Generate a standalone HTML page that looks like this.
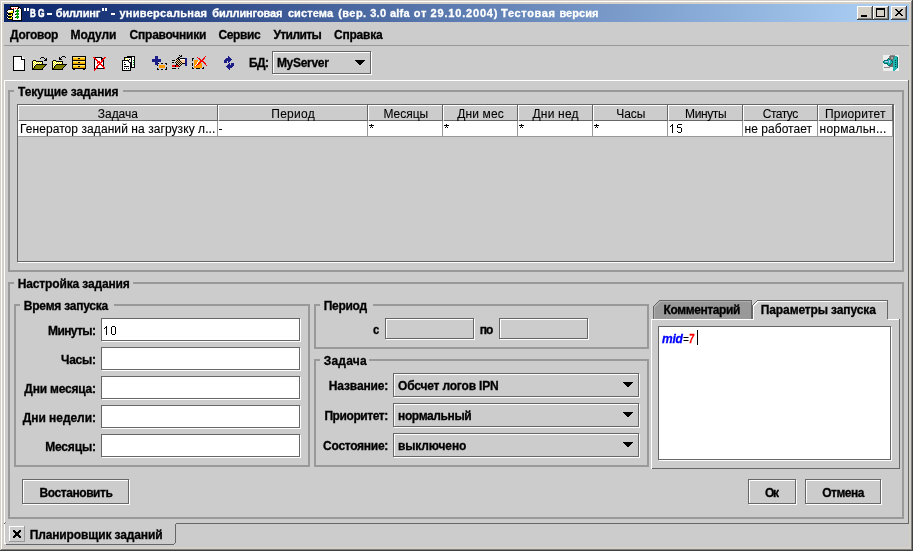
<!DOCTYPE html>
<html><head><meta charset="utf-8"><style>
html,body{margin:0;padding:0;width:913px;height:551px;overflow:hidden;background:#d4d0c8}
body>div,body>svg{position:absolute}
.t{position:absolute;font-family:'Liberation Sans', sans-serif;line-height:15px;white-space:pre}
</style></head><body>
<div style="left:0px;top:0px;width:913px;height:551px;background:#d4d0c8;"></div><div style="left:0px;top:0px;width:912px;height:1px;background:#d4d0c8;"></div><div style="left:0px;top:0px;width:1px;height:550px;background:#d4d0c8;"></div><div style="left:1px;top:1px;width:910px;height:1px;background:#ffffff;"></div><div style="left:1px;top:1px;width:1px;height:548px;background:#ffffff;"></div><div style="left:0px;top:550px;width:913px;height:1px;background:#404040;"></div><div style="left:912px;top:0px;width:1px;height:551px;background:#404040;"></div><div style="left:1px;top:549px;width:911px;height:1px;background:#808080;"></div><div style="left:911px;top:1px;width:1px;height:549px;background:#808080;"></div><div style="left:4px;top:4px;width:905px;height:18px;background:;background:linear-gradient(to right,#0a246a 0px,#a6caf0 855px)"></div><div style="left:4px;top:22px;width:905px;height:525px;background:#cccccc;"></div><div style="left:857px;top:6px;width:16px;height:14px;background:#d4d0c8;"></div><div style="left:857px;top:6px;width:16px;height:1px;background:#ffffff;"></div><div style="left:857px;top:6px;width:1px;height:14px;background:#ffffff;"></div><div style="left:857px;top:19px;width:16px;height:1px;background:#404040;"></div><div style="left:872px;top:6px;width:1px;height:14px;background:#404040;"></div><div style="left:858px;top:18px;width:14px;height:1px;background:#808080;"></div><div style="left:871px;top:7px;width:1px;height:12px;background:#808080;"></div><div style="left:861px;top:15px;width:6px;height:2px;background:#000"></div><div style="left:873px;top:6px;width:16px;height:14px;background:#d4d0c8;"></div><div style="left:873px;top:6px;width:16px;height:1px;background:#ffffff;"></div><div style="left:873px;top:6px;width:1px;height:14px;background:#ffffff;"></div><div style="left:873px;top:19px;width:16px;height:1px;background:#404040;"></div><div style="left:888px;top:6px;width:1px;height:14px;background:#404040;"></div><div style="left:874px;top:18px;width:14px;height:1px;background:#808080;"></div><div style="left:887px;top:7px;width:1px;height:12px;background:#808080;"></div><div style="left:876px;top:8px;width:9px;height:9px;box-sizing:border-box;border:1px solid #000;border-top-width:2px"></div><div style="left:891px;top:6px;width:16px;height:14px;background:#d4d0c8;"></div><div style="left:891px;top:6px;width:16px;height:1px;background:#ffffff;"></div><div style="left:891px;top:6px;width:1px;height:14px;background:#ffffff;"></div><div style="left:891px;top:19px;width:16px;height:1px;background:#404040;"></div><div style="left:906px;top:6px;width:1px;height:14px;background:#404040;"></div><div style="left:892px;top:18px;width:14px;height:1px;background:#808080;"></div><div style="left:905px;top:7px;width:1px;height:12px;background:#808080;"></div><svg style="left:895px;top:9px" width="8" height="7" shape-rendering="crispEdges"><rect x="0" y="0" width="2" height="1" fill="#000"/><rect x="6" y="0" width="2" height="1" fill="#000"/><rect x="1" y="1" width="2" height="1" fill="#000"/><rect x="5" y="1" width="2" height="1" fill="#000"/><rect x="2" y="2" width="2" height="1" fill="#000"/><rect x="4" y="2" width="2" height="1" fill="#000"/><rect x="3" y="3" width="2" height="1" fill="#000"/><rect x="3" y="3" width="2" height="1" fill="#000"/><rect x="2" y="4" width="2" height="1" fill="#000"/><rect x="4" y="4" width="2" height="1" fill="#000"/><rect x="1" y="5" width="2" height="1" fill="#000"/><rect x="5" y="5" width="2" height="1" fill="#000"/><rect x="0" y="6" width="2" height="1" fill="#000"/><rect x="6" y="6" width="2" height="1" fill="#000"/></svg><div style="left:24px;top:8px;width:2px;height:3px;background:#fff;"></div><div style="left:27px;top:8px;width:2px;height:3px;background:#fff;"></div><div style="left:47px;top:13px;width:5px;height:2px;background:#fff;"></div><div style="left:102px;top:8px;width:2px;height:3px;background:#fff;"></div><div style="left:105px;top:8px;width:2px;height:3px;background:#fff;"></div><div style="left:111px;top:13px;width:4px;height:2px;background:#fff;"></div><div style="left:4px;top:45px;width:905px;height:1px;background:#999999;"></div><div style="left:272px;top:51px;width:100px;height:24px;background:#cccccc;"></div><div style="left:273px;top:52px;width:99px;height:1px;background:#ffffff;"></div><div style="left:273px;top:74px;width:99px;height:1px;background:#ffffff;"></div><div style="left:273px;top:52px;width:1px;height:23px;background:#ffffff;"></div><div style="left:371px;top:52px;width:1px;height:23px;background:#ffffff;"></div><div style="left:272px;top:51px;width:99px;height:1px;background:#666666;"></div><div style="left:272px;top:73px;width:99px;height:1px;background:#666666;"></div><div style="left:272px;top:51px;width:1px;height:23px;background:#666666;"></div><div style="left:370px;top:51px;width:1px;height:23px;background:#666666;"></div><div style="left:272px;top:74px;width:1px;height:1px;background:#cccccc;"></div><div style="left:371px;top:51px;width:1px;height:1px;background:#cccccc;"></div><svg style="left:355px;top:60px" width="10" height="5" shape-rendering="crispEdges"><rect x="0" y="0" width="10" height="1" fill="#000"/><rect x="1" y="1" width="8" height="1" fill="#000"/><rect x="2" y="2" width="6" height="1" fill="#000"/><rect x="3" y="3" width="4" height="1" fill="#000"/><rect x="4" y="4" width="2" height="1" fill="#000"/></svg><div style="left:4px;top:80px;width:904px;height:1px;background:#ffffff;"></div><div style="left:4px;top:80px;width:1px;height:464px;background:#ffffff;"></div><div style="left:908px;top:80px;width:1px;height:444px;background:#666666;"></div><div style="left:176px;top:523px;width:733px;height:1px;background:#666666;"></div><div style="left:175px;top:524px;width:1px;height:19px;background:#666666;"></div><div style="left:174px;top:543px;width:1px;height:1px;background:#666666;"></div><div style="left:6px;top:544px;width:168px;height:1px;background:#666666;"></div><div style="left:5px;top:543px;width:1px;height:1px;background:#ffffff;"></div><div style="left:4px;top:523px;width:1px;height:1px;background:#555555;"></div><div style="left:5px;top:522px;width:1px;height:1px;background:#888888;"></div><div style="left:9px;top:526px;width:16px;height:1px;background:#ffffff;"></div><div style="left:9px;top:526px;width:1px;height:16px;background:#ffffff;"></div><div style="left:9px;top:541px;width:16px;height:1px;background:#999999;"></div><div style="left:24px;top:526px;width:1px;height:16px;background:#999999;"></div><svg style="left:13px;top:530px" width="9" height="9" shape-rendering="crispEdges"><rect x="0" y="0" width="2" height="2" fill="#000"/><rect x="6" y="0" width="2" height="2" fill="#000"/><rect x="1" y="1" width="2" height="2" fill="#000"/><rect x="5" y="1" width="2" height="2" fill="#000"/><rect x="2" y="2" width="2" height="2" fill="#000"/><rect x="4" y="2" width="2" height="2" fill="#000"/><rect x="3" y="3" width="2" height="2" fill="#000"/><rect x="3" y="3" width="2" height="2" fill="#000"/><rect x="4" y="4" width="2" height="2" fill="#000"/><rect x="2" y="4" width="2" height="2" fill="#000"/><rect x="5" y="5" width="2" height="2" fill="#000"/><rect x="1" y="5" width="2" height="2" fill="#000"/><rect x="6" y="6" width="2" height="2" fill="#000"/><rect x="0" y="6" width="2" height="2" fill="#000"/></svg><div style="left:8px;top:90px;width:6px;height:2px;background:#999999;"></div><div style="left:123px;top:90px;width:781px;height:2px;background:#999999;"></div><div style="left:8px;top:270px;width:896px;height:2px;background:#999999;"></div><div style="left:8px;top:90px;width:2px;height:182px;background:#999999;"></div><div style="left:902px;top:90px;width:2px;height:182px;background:#999999;"></div><div style="left:18px;top:105px;width:875px;height:156px;background:#cccccc;"></div><div style="left:17px;top:104px;width:877px;height:1px;background:#666666;"></div><div style="left:17px;top:261px;width:877px;height:1px;background:#666666;"></div><div style="left:17px;top:104px;width:1px;height:158px;background:#666666;"></div><div style="left:893px;top:104px;width:1px;height:158px;background:#666666;"></div><div style="left:894px;top:105px;width:1px;height:158px;background:#ffffff;"></div><div style="left:18px;top:262px;width:877px;height:1px;background:#ffffff;"></div><div style="left:18px;top:105px;width:200px;height:16px;background:#cccccc;"></div><div style="left:18px;top:105px;width:199px;height:1px;background:#ffffff;"></div><div style="left:18px;top:105px;width:1px;height:15px;background:#ffffff;"></div><div style="left:217px;top:105px;width:1px;height:16px;background:#666666;"></div><div style="left:19px;top:120px;width:199px;height:1px;background:#666666;"></div><div style="left:18px;top:121px;width:200px;height:15px;background:#ffffff;"></div><div style="left:217px;top:121px;width:1px;height:16px;background:#999999;"></div><div style="left:18px;top:136px;width:200px;height:1px;background:#999999;"></div><div style="left:218px;top:105px;width:150px;height:16px;background:#cccccc;"></div><div style="left:218px;top:105px;width:149px;height:1px;background:#ffffff;"></div><div style="left:218px;top:105px;width:1px;height:15px;background:#ffffff;"></div><div style="left:367px;top:105px;width:1px;height:16px;background:#666666;"></div><div style="left:219px;top:120px;width:149px;height:1px;background:#666666;"></div><div style="left:218px;top:121px;width:150px;height:15px;background:#ffffff;"></div><div style="left:367px;top:121px;width:1px;height:16px;background:#999999;"></div><div style="left:218px;top:136px;width:150px;height:1px;background:#999999;"></div><div style="left:219px;top:129px;width:3px;height:1px;background:#000;"></div><div style="left:368px;top:105px;width:75px;height:16px;background:#cccccc;"></div><div style="left:368px;top:105px;width:74px;height:1px;background:#ffffff;"></div><div style="left:368px;top:105px;width:1px;height:15px;background:#ffffff;"></div><div style="left:442px;top:105px;width:1px;height:16px;background:#666666;"></div><div style="left:369px;top:120px;width:74px;height:1px;background:#666666;"></div><div style="left:368px;top:121px;width:75px;height:15px;background:#ffffff;"></div><div style="left:442px;top:121px;width:1px;height:16px;background:#999999;"></div><div style="left:368px;top:136px;width:75px;height:1px;background:#999999;"></div><svg style="left:369px;top:124px" width="5" height="4" shape-rendering="crispEdges"><rect x="2" y="0" width="1" height="1"/><rect x="0" y="1" width="5" height="1"/><rect x="2" y="2" width="1" height="1"/><rect x="1" y="3" width="1" height="1"/><rect x="3" y="3" width="1" height="1"/></svg><div style="left:443px;top:105px;width:75px;height:16px;background:#cccccc;"></div><div style="left:443px;top:105px;width:74px;height:1px;background:#ffffff;"></div><div style="left:443px;top:105px;width:1px;height:15px;background:#ffffff;"></div><div style="left:517px;top:105px;width:1px;height:16px;background:#666666;"></div><div style="left:444px;top:120px;width:74px;height:1px;background:#666666;"></div><div style="left:443px;top:121px;width:75px;height:15px;background:#ffffff;"></div><div style="left:517px;top:121px;width:1px;height:16px;background:#999999;"></div><div style="left:443px;top:136px;width:75px;height:1px;background:#999999;"></div><svg style="left:444px;top:124px" width="5" height="4" shape-rendering="crispEdges"><rect x="2" y="0" width="1" height="1"/><rect x="0" y="1" width="5" height="1"/><rect x="2" y="2" width="1" height="1"/><rect x="1" y="3" width="1" height="1"/><rect x="3" y="3" width="1" height="1"/></svg><div style="left:518px;top:105px;width:75px;height:16px;background:#cccccc;"></div><div style="left:518px;top:105px;width:74px;height:1px;background:#ffffff;"></div><div style="left:518px;top:105px;width:1px;height:15px;background:#ffffff;"></div><div style="left:592px;top:105px;width:1px;height:16px;background:#666666;"></div><div style="left:519px;top:120px;width:74px;height:1px;background:#666666;"></div><div style="left:518px;top:121px;width:75px;height:15px;background:#ffffff;"></div><div style="left:592px;top:121px;width:1px;height:16px;background:#999999;"></div><div style="left:518px;top:136px;width:75px;height:1px;background:#999999;"></div><svg style="left:519px;top:124px" width="5" height="4" shape-rendering="crispEdges"><rect x="2" y="0" width="1" height="1"/><rect x="0" y="1" width="5" height="1"/><rect x="2" y="2" width="1" height="1"/><rect x="1" y="3" width="1" height="1"/><rect x="3" y="3" width="1" height="1"/></svg><div style="left:593px;top:105px;width:75px;height:16px;background:#cccccc;"></div><div style="left:593px;top:105px;width:74px;height:1px;background:#ffffff;"></div><div style="left:593px;top:105px;width:1px;height:15px;background:#ffffff;"></div><div style="left:667px;top:105px;width:1px;height:16px;background:#666666;"></div><div style="left:594px;top:120px;width:74px;height:1px;background:#666666;"></div><div style="left:593px;top:121px;width:75px;height:15px;background:#ffffff;"></div><div style="left:667px;top:121px;width:1px;height:16px;background:#999999;"></div><div style="left:593px;top:136px;width:75px;height:1px;background:#999999;"></div><svg style="left:594px;top:124px" width="5" height="4" shape-rendering="crispEdges"><rect x="2" y="0" width="1" height="1"/><rect x="0" y="1" width="5" height="1"/><rect x="2" y="2" width="1" height="1"/><rect x="1" y="3" width="1" height="1"/><rect x="3" y="3" width="1" height="1"/></svg><div style="left:668px;top:105px;width:75px;height:16px;background:#cccccc;"></div><div style="left:668px;top:105px;width:74px;height:1px;background:#ffffff;"></div><div style="left:668px;top:105px;width:1px;height:15px;background:#ffffff;"></div><div style="left:742px;top:105px;width:1px;height:16px;background:#666666;"></div><div style="left:669px;top:120px;width:74px;height:1px;background:#666666;"></div><div style="left:668px;top:121px;width:75px;height:15px;background:#ffffff;"></div><div style="left:742px;top:121px;width:1px;height:16px;background:#999999;"></div><div style="left:668px;top:136px;width:75px;height:1px;background:#999999;"></div><div style="left:672px;top:124px;width:1px;height:9px;background:#000;"></div><div style="left:671px;top:125px;width:1px;height:1px;background:#000;"></div><div style="left:670px;top:126px;width:1px;height:1px;background:#000;"></div><div style="left:678px;top:124px;width:4px;height:1px;background:#000;"></div><div style="left:677px;top:125px;width:1px;height:3px;background:#000;"></div><div style="left:678px;top:127px;width:3px;height:1px;background:#000;"></div><div style="left:681px;top:128px;width:1px;height:4px;background:#000;"></div><div style="left:678px;top:132px;width:3px;height:1px;background:#000;"></div><div style="left:677px;top:131px;width:1px;height:1px;background:#000;"></div><div style="left:743px;top:105px;width:75px;height:16px;background:#cccccc;"></div><div style="left:743px;top:105px;width:74px;height:1px;background:#ffffff;"></div><div style="left:743px;top:105px;width:1px;height:15px;background:#ffffff;"></div><div style="left:817px;top:105px;width:1px;height:16px;background:#666666;"></div><div style="left:744px;top:120px;width:74px;height:1px;background:#666666;"></div><div style="left:743px;top:121px;width:75px;height:15px;background:#ffffff;"></div><div style="left:817px;top:121px;width:1px;height:16px;background:#999999;"></div><div style="left:743px;top:136px;width:75px;height:1px;background:#999999;"></div><div style="left:818px;top:105px;width:75px;height:16px;background:#cccccc;"></div><div style="left:818px;top:105px;width:74px;height:1px;background:#ffffff;"></div><div style="left:818px;top:105px;width:1px;height:15px;background:#ffffff;"></div><div style="left:892px;top:105px;width:1px;height:16px;background:#666666;"></div><div style="left:819px;top:120px;width:74px;height:1px;background:#666666;"></div><div style="left:818px;top:121px;width:75px;height:15px;background:#ffffff;"></div><div style="left:892px;top:121px;width:1px;height:16px;background:#999999;"></div><div style="left:818px;top:136px;width:75px;height:1px;background:#999999;"></div><div style="left:8px;top:282px;width:6px;height:2px;background:#999999;"></div><div style="left:133px;top:282px;width:771px;height:2px;background:#999999;"></div><div style="left:8px;top:517px;width:896px;height:2px;background:#999999;"></div><div style="left:8px;top:282px;width:2px;height:237px;background:#999999;"></div><div style="left:902px;top:282px;width:2px;height:237px;background:#999999;"></div><div style="left:14px;top:304px;width:6px;height:2px;background:#999999;"></div><div style="left:114px;top:304px;width:196px;height:2px;background:#999999;"></div><div style="left:14px;top:465px;width:296px;height:2px;background:#999999;"></div><div style="left:14px;top:304px;width:2px;height:163px;background:#999999;"></div><div style="left:308px;top:304px;width:2px;height:163px;background:#999999;"></div><div style="left:101px;top:318px;width:200px;height:24px;background:#ffffff;"></div><div style="left:102px;top:319px;width:199px;height:1px;background:#ffffff;"></div><div style="left:102px;top:341px;width:199px;height:1px;background:#ffffff;"></div><div style="left:102px;top:319px;width:1px;height:23px;background:#ffffff;"></div><div style="left:300px;top:319px;width:1px;height:23px;background:#ffffff;"></div><div style="left:101px;top:318px;width:199px;height:1px;background:#666666;"></div><div style="left:101px;top:340px;width:199px;height:1px;background:#666666;"></div><div style="left:101px;top:318px;width:1px;height:23px;background:#666666;"></div><div style="left:299px;top:318px;width:1px;height:23px;background:#666666;"></div><div style="left:101px;top:341px;width:1px;height:1px;background:#cccccc;"></div><div style="left:300px;top:318px;width:1px;height:1px;background:#cccccc;"></div><div style="left:106px;top:326px;width:1px;height:9px;background:#000;"></div><div style="left:105px;top:327px;width:1px;height:1px;background:#000;"></div><div style="left:104px;top:328px;width:1px;height:1px;background:#000;"></div><div style="left:112px;top:326px;width:3px;height:1px;background:#000;"></div><div style="left:112px;top:334px;width:3px;height:1px;background:#000;"></div><div style="left:111px;top:327px;width:1px;height:7px;background:#000;"></div><div style="left:115px;top:327px;width:1px;height:7px;background:#000;"></div><div style="left:101px;top:347px;width:200px;height:24px;background:#ffffff;"></div><div style="left:102px;top:348px;width:199px;height:1px;background:#ffffff;"></div><div style="left:102px;top:370px;width:199px;height:1px;background:#ffffff;"></div><div style="left:102px;top:348px;width:1px;height:23px;background:#ffffff;"></div><div style="left:300px;top:348px;width:1px;height:23px;background:#ffffff;"></div><div style="left:101px;top:347px;width:199px;height:1px;background:#666666;"></div><div style="left:101px;top:369px;width:199px;height:1px;background:#666666;"></div><div style="left:101px;top:347px;width:1px;height:23px;background:#666666;"></div><div style="left:299px;top:347px;width:1px;height:23px;background:#666666;"></div><div style="left:101px;top:370px;width:1px;height:1px;background:#cccccc;"></div><div style="left:300px;top:347px;width:1px;height:1px;background:#cccccc;"></div><div style="left:101px;top:376px;width:200px;height:24px;background:#ffffff;"></div><div style="left:102px;top:377px;width:199px;height:1px;background:#ffffff;"></div><div style="left:102px;top:399px;width:199px;height:1px;background:#ffffff;"></div><div style="left:102px;top:377px;width:1px;height:23px;background:#ffffff;"></div><div style="left:300px;top:377px;width:1px;height:23px;background:#ffffff;"></div><div style="left:101px;top:376px;width:199px;height:1px;background:#666666;"></div><div style="left:101px;top:398px;width:199px;height:1px;background:#666666;"></div><div style="left:101px;top:376px;width:1px;height:23px;background:#666666;"></div><div style="left:299px;top:376px;width:1px;height:23px;background:#666666;"></div><div style="left:101px;top:399px;width:1px;height:1px;background:#cccccc;"></div><div style="left:300px;top:376px;width:1px;height:1px;background:#cccccc;"></div><div style="left:101px;top:405px;width:200px;height:24px;background:#ffffff;"></div><div style="left:102px;top:406px;width:199px;height:1px;background:#ffffff;"></div><div style="left:102px;top:428px;width:199px;height:1px;background:#ffffff;"></div><div style="left:102px;top:406px;width:1px;height:23px;background:#ffffff;"></div><div style="left:300px;top:406px;width:1px;height:23px;background:#ffffff;"></div><div style="left:101px;top:405px;width:199px;height:1px;background:#666666;"></div><div style="left:101px;top:427px;width:199px;height:1px;background:#666666;"></div><div style="left:101px;top:405px;width:1px;height:23px;background:#666666;"></div><div style="left:299px;top:405px;width:1px;height:23px;background:#666666;"></div><div style="left:101px;top:428px;width:1px;height:1px;background:#cccccc;"></div><div style="left:300px;top:405px;width:1px;height:1px;background:#cccccc;"></div><div style="left:101px;top:434px;width:200px;height:24px;background:#ffffff;"></div><div style="left:102px;top:435px;width:199px;height:1px;background:#ffffff;"></div><div style="left:102px;top:457px;width:199px;height:1px;background:#ffffff;"></div><div style="left:102px;top:435px;width:1px;height:23px;background:#ffffff;"></div><div style="left:300px;top:435px;width:1px;height:23px;background:#ffffff;"></div><div style="left:101px;top:434px;width:199px;height:1px;background:#666666;"></div><div style="left:101px;top:456px;width:199px;height:1px;background:#666666;"></div><div style="left:101px;top:434px;width:1px;height:23px;background:#666666;"></div><div style="left:299px;top:434px;width:1px;height:23px;background:#666666;"></div><div style="left:101px;top:457px;width:1px;height:1px;background:#cccccc;"></div><div style="left:300px;top:434px;width:1px;height:1px;background:#cccccc;"></div><div style="left:314px;top:304px;width:6px;height:2px;background:#999999;"></div><div style="left:373px;top:304px;width:276px;height:2px;background:#999999;"></div><div style="left:314px;top:347px;width:335px;height:2px;background:#999999;"></div><div style="left:314px;top:304px;width:2px;height:45px;background:#999999;"></div><div style="left:647px;top:304px;width:2px;height:45px;background:#999999;"></div><div style="left:385px;top:318px;width:90px;height:22px;background:#cccccc;"></div><div style="left:386px;top:319px;width:89px;height:1px;background:#ffffff;"></div><div style="left:386px;top:339px;width:89px;height:1px;background:#ffffff;"></div><div style="left:386px;top:319px;width:1px;height:21px;background:#ffffff;"></div><div style="left:474px;top:319px;width:1px;height:21px;background:#ffffff;"></div><div style="left:385px;top:318px;width:89px;height:1px;background:#666666;"></div><div style="left:385px;top:338px;width:89px;height:1px;background:#666666;"></div><div style="left:385px;top:318px;width:1px;height:21px;background:#666666;"></div><div style="left:473px;top:318px;width:1px;height:21px;background:#666666;"></div><div style="left:385px;top:339px;width:1px;height:1px;background:#cccccc;"></div><div style="left:474px;top:318px;width:1px;height:1px;background:#cccccc;"></div><div style="left:499px;top:318px;width:90px;height:22px;background:#cccccc;"></div><div style="left:500px;top:319px;width:89px;height:1px;background:#ffffff;"></div><div style="left:500px;top:339px;width:89px;height:1px;background:#ffffff;"></div><div style="left:500px;top:319px;width:1px;height:21px;background:#ffffff;"></div><div style="left:588px;top:319px;width:1px;height:21px;background:#ffffff;"></div><div style="left:499px;top:318px;width:89px;height:1px;background:#666666;"></div><div style="left:499px;top:338px;width:89px;height:1px;background:#666666;"></div><div style="left:499px;top:318px;width:1px;height:21px;background:#666666;"></div><div style="left:587px;top:318px;width:1px;height:21px;background:#666666;"></div><div style="left:499px;top:339px;width:1px;height:1px;background:#cccccc;"></div><div style="left:588px;top:318px;width:1px;height:1px;background:#cccccc;"></div><div style="left:314px;top:359px;width:6px;height:2px;background:#999999;"></div><div style="left:369px;top:359px;width:280px;height:2px;background:#999999;"></div><div style="left:314px;top:465px;width:335px;height:2px;background:#999999;"></div><div style="left:314px;top:359px;width:2px;height:108px;background:#999999;"></div><div style="left:647px;top:359px;width:2px;height:108px;background:#999999;"></div><div style="left:393px;top:373px;width:247px;height:25px;background:#cccccc;"></div><div style="left:394px;top:374px;width:246px;height:1px;background:#ffffff;"></div><div style="left:394px;top:397px;width:246px;height:1px;background:#ffffff;"></div><div style="left:394px;top:374px;width:1px;height:24px;background:#ffffff;"></div><div style="left:639px;top:374px;width:1px;height:24px;background:#ffffff;"></div><div style="left:393px;top:373px;width:246px;height:1px;background:#666666;"></div><div style="left:393px;top:396px;width:246px;height:1px;background:#666666;"></div><div style="left:393px;top:373px;width:1px;height:24px;background:#666666;"></div><div style="left:638px;top:373px;width:1px;height:24px;background:#666666;"></div><div style="left:393px;top:397px;width:1px;height:1px;background:#cccccc;"></div><div style="left:639px;top:373px;width:1px;height:1px;background:#cccccc;"></div><svg style="left:623px;top:382px" width="10" height="5" shape-rendering="crispEdges"><rect x="0" y="0" width="10" height="1" fill="#000"/><rect x="1" y="1" width="8" height="1" fill="#000"/><rect x="2" y="2" width="6" height="1" fill="#000"/><rect x="3" y="3" width="4" height="1" fill="#000"/><rect x="4" y="4" width="2" height="1" fill="#000"/></svg><div style="left:393px;top:403px;width:247px;height:25px;background:#cccccc;"></div><div style="left:394px;top:404px;width:246px;height:1px;background:#ffffff;"></div><div style="left:394px;top:427px;width:246px;height:1px;background:#ffffff;"></div><div style="left:394px;top:404px;width:1px;height:24px;background:#ffffff;"></div><div style="left:639px;top:404px;width:1px;height:24px;background:#ffffff;"></div><div style="left:393px;top:403px;width:246px;height:1px;background:#666666;"></div><div style="left:393px;top:426px;width:246px;height:1px;background:#666666;"></div><div style="left:393px;top:403px;width:1px;height:24px;background:#666666;"></div><div style="left:638px;top:403px;width:1px;height:24px;background:#666666;"></div><div style="left:393px;top:427px;width:1px;height:1px;background:#cccccc;"></div><div style="left:639px;top:403px;width:1px;height:1px;background:#cccccc;"></div><svg style="left:623px;top:412px" width="10" height="5" shape-rendering="crispEdges"><rect x="0" y="0" width="10" height="1" fill="#000"/><rect x="1" y="1" width="8" height="1" fill="#000"/><rect x="2" y="2" width="6" height="1" fill="#000"/><rect x="3" y="3" width="4" height="1" fill="#000"/><rect x="4" y="4" width="2" height="1" fill="#000"/></svg><div style="left:393px;top:433px;width:247px;height:25px;background:#cccccc;"></div><div style="left:394px;top:434px;width:246px;height:1px;background:#ffffff;"></div><div style="left:394px;top:457px;width:246px;height:1px;background:#ffffff;"></div><div style="left:394px;top:434px;width:1px;height:24px;background:#ffffff;"></div><div style="left:639px;top:434px;width:1px;height:24px;background:#ffffff;"></div><div style="left:393px;top:433px;width:246px;height:1px;background:#666666;"></div><div style="left:393px;top:456px;width:246px;height:1px;background:#666666;"></div><div style="left:393px;top:433px;width:1px;height:24px;background:#666666;"></div><div style="left:638px;top:433px;width:1px;height:24px;background:#666666;"></div><div style="left:393px;top:457px;width:1px;height:1px;background:#cccccc;"></div><div style="left:639px;top:433px;width:1px;height:1px;background:#cccccc;"></div><svg style="left:623px;top:442px" width="10" height="5" shape-rendering="crispEdges"><rect x="0" y="0" width="10" height="1" fill="#000"/><rect x="1" y="1" width="8" height="1" fill="#000"/><rect x="2" y="2" width="6" height="1" fill="#000"/><rect x="3" y="3" width="4" height="1" fill="#000"/><rect x="4" y="4" width="2" height="1" fill="#000"/></svg><svg style="left:651px;top:298px" width="250" height="24" shape-rendering="crispEdges"><path d="M3 21 V8 L9 2 H101 V21 Z" fill="#999999"/><path d="M2.5 21 V8.5 L8.5 2.5 H100.5 V21" fill="none" stroke="#666666"/><path d="M3.5 21 V8.9 L8.9 3.5 H100" fill="none" stroke="#b0b0b0"/><path d="M101 22 V8 L107 2 H237 V22 Z" fill="#cccccc"/><path d="M101.5 21 V7.5 L106.5 2.5 H236.5 V21" fill="none" stroke="#666666"/><path d="M102.5 22 V8 L107 3.5 H236" fill="none" stroke="#ffffff"/></svg><div style="left:651px;top:319px;width:102px;height:1px;background:#ffffff;"></div><div style="left:888px;top:319px;width:11px;height:1px;background:#ffffff;"></div><div style="left:651px;top:319px;width:1px;height:150px;background:#ffffff;"></div><div style="left:652px;top:468px;width:248px;height:1px;background:#666666;"></div><div style="left:899px;top:319px;width:1px;height:150px;background:#666666;"></div><div style="left:658px;top:326px;width:234px;height:135px;background:#ffffff;"></div><div style="left:659px;top:327px;width:233px;height:1px;background:#ffffff;"></div><div style="left:659px;top:460px;width:233px;height:1px;background:#ffffff;"></div><div style="left:659px;top:327px;width:1px;height:134px;background:#ffffff;"></div><div style="left:891px;top:327px;width:1px;height:134px;background:#ffffff;"></div><div style="left:658px;top:326px;width:233px;height:1px;background:#666666;"></div><div style="left:658px;top:459px;width:233px;height:1px;background:#666666;"></div><div style="left:658px;top:326px;width:1px;height:134px;background:#666666;"></div><div style="left:890px;top:326px;width:1px;height:134px;background:#666666;"></div><div style="left:658px;top:460px;width:1px;height:1px;background:#cccccc;"></div><div style="left:891px;top:326px;width:1px;height:1px;background:#cccccc;"></div><div style="left:697px;top:330px;width:1px;height:15px;background:#000000;"></div><div style="left:22px;top:479px;width:108px;height:26px;background:#cccccc;"></div><div style="left:23px;top:480px;width:107px;height:1px;background:#ffffff;"></div><div style="left:23px;top:504px;width:107px;height:1px;background:#ffffff;"></div><div style="left:23px;top:480px;width:1px;height:25px;background:#ffffff;"></div><div style="left:129px;top:480px;width:1px;height:25px;background:#ffffff;"></div><div style="left:22px;top:479px;width:107px;height:1px;background:#666666;"></div><div style="left:22px;top:503px;width:107px;height:1px;background:#666666;"></div><div style="left:22px;top:479px;width:1px;height:25px;background:#666666;"></div><div style="left:128px;top:479px;width:1px;height:25px;background:#666666;"></div><div style="left:22px;top:504px;width:1px;height:1px;background:#cccccc;"></div><div style="left:129px;top:479px;width:1px;height:1px;background:#cccccc;"></div><div style="left:748px;top:479px;width:49px;height:26px;background:#cccccc;"></div><div style="left:749px;top:480px;width:48px;height:1px;background:#ffffff;"></div><div style="left:749px;top:504px;width:48px;height:1px;background:#ffffff;"></div><div style="left:749px;top:480px;width:1px;height:25px;background:#ffffff;"></div><div style="left:796px;top:480px;width:1px;height:25px;background:#ffffff;"></div><div style="left:748px;top:479px;width:48px;height:1px;background:#666666;"></div><div style="left:748px;top:503px;width:48px;height:1px;background:#666666;"></div><div style="left:748px;top:479px;width:1px;height:25px;background:#666666;"></div><div style="left:795px;top:479px;width:1px;height:25px;background:#666666;"></div><div style="left:748px;top:504px;width:1px;height:1px;background:#cccccc;"></div><div style="left:796px;top:479px;width:1px;height:1px;background:#cccccc;"></div><div style="left:805px;top:479px;width:77px;height:26px;background:#cccccc;"></div><div style="left:806px;top:480px;width:76px;height:1px;background:#ffffff;"></div><div style="left:806px;top:504px;width:76px;height:1px;background:#ffffff;"></div><div style="left:806px;top:480px;width:1px;height:25px;background:#ffffff;"></div><div style="left:881px;top:480px;width:1px;height:25px;background:#ffffff;"></div><div style="left:805px;top:479px;width:76px;height:1px;background:#666666;"></div><div style="left:805px;top:503px;width:76px;height:1px;background:#666666;"></div><div style="left:805px;top:479px;width:1px;height:25px;background:#666666;"></div><div style="left:880px;top:479px;width:1px;height:25px;background:#666666;"></div><div style="left:805px;top:504px;width:1px;height:1px;background:#cccccc;"></div><div style="left:881px;top:479px;width:1px;height:1px;background:#cccccc;"></div>
<svg style="position:absolute;left:13px;top:56px" width="12" height="15" shape-rendering="crispEdges"><rect x="0" y="0" width="9" height="1" fill="#000000"/><rect x="9" y="0" width="1" height="1" fill="#e0e0e0"/><rect x="0" y="1" width="1" height="1" fill="#000000"/><rect x="1" y="1" width="7" height="1" fill="#ffffff"/><rect x="8" y="1" width="1" height="1" fill="#000000"/><rect x="9" y="1" width="1" height="1" fill="#ffffff"/><rect x="10" y="1" width="1" height="1" fill="#e0e0e0"/><rect x="0" y="2" width="1" height="1" fill="#000000"/><rect x="1" y="2" width="7" height="1" fill="#ffffff"/><rect x="8" y="2" width="1" height="1" fill="#000000"/><rect x="9" y="2" width="2" height="1" fill="#ffffff"/><rect x="11" y="2" width="1" height="1" fill="#e0e0e0"/><rect x="0" y="3" width="1" height="1" fill="#000000"/><rect x="1" y="3" width="7" height="1" fill="#ffffff"/><rect x="8" y="3" width="4" height="1" fill="#000000"/><rect x="0" y="4" width="1" height="1" fill="#000000"/><rect x="1" y="4" width="10" height="1" fill="#ffffff"/><rect x="11" y="4" width="1" height="1" fill="#000000"/><rect x="0" y="5" width="1" height="1" fill="#000000"/><rect x="1" y="5" width="10" height="1" fill="#ffffff"/><rect x="11" y="5" width="1" height="1" fill="#000000"/><rect x="0" y="6" width="1" height="1" fill="#000000"/><rect x="1" y="6" width="10" height="1" fill="#ffffff"/><rect x="11" y="6" width="1" height="1" fill="#000000"/><rect x="0" y="7" width="1" height="1" fill="#000000"/><rect x="1" y="7" width="10" height="1" fill="#ffffff"/><rect x="11" y="7" width="1" height="1" fill="#000000"/><rect x="0" y="8" width="1" height="1" fill="#000000"/><rect x="1" y="8" width="10" height="1" fill="#ffffff"/><rect x="11" y="8" width="1" height="1" fill="#000000"/><rect x="0" y="9" width="1" height="1" fill="#000000"/><rect x="1" y="9" width="10" height="1" fill="#ffffff"/><rect x="11" y="9" width="1" height="1" fill="#000000"/><rect x="0" y="10" width="1" height="1" fill="#000000"/><rect x="1" y="10" width="10" height="1" fill="#ffffff"/><rect x="11" y="10" width="1" height="1" fill="#000000"/><rect x="0" y="11" width="1" height="1" fill="#000000"/><rect x="1" y="11" width="10" height="1" fill="#ffffff"/><rect x="11" y="11" width="1" height="1" fill="#000000"/><rect x="0" y="12" width="1" height="1" fill="#000000"/><rect x="1" y="12" width="10" height="1" fill="#ffffff"/><rect x="11" y="12" width="1" height="1" fill="#000000"/><rect x="0" y="13" width="1" height="1" fill="#000000"/><rect x="1" y="13" width="10" height="1" fill="#ffffff"/><rect x="11" y="13" width="1" height="1" fill="#000000"/><rect x="0" y="14" width="12" height="1" fill="#000000"/></svg>
<svg style="position:absolute;left:40px;top:57px" width="7" height="4" shape-rendering="crispEdges"><rect x="1" y="0" width="3" height="1" fill="#000000"/><rect x="0" y="1" width="1" height="1" fill="#000000"/><rect x="4" y="1" width="1" height="1" fill="#000000"/><rect x="6" y="1" width="1" height="1" fill="#000000"/><rect x="5" y="2" width="2" height="1" fill="#000000"/><rect x="4" y="3" width="3" height="1" fill="#000000"/></svg>
<svg style="position:absolute;left:32px;top:60px" width="15" height="10" shape-rendering="crispEdges"><rect x="1" y="0" width="3" height="1" fill="#000000"/><rect x="0" y="1" width="1" height="1" fill="#000000"/><rect x="1" y="1" width="1" height="1" fill="#ffff00"/><rect x="2" y="1" width="1" height="1" fill="#ffffff"/><rect x="3" y="1" width="1" height="1" fill="#ffff00"/><rect x="4" y="1" width="7" height="1" fill="#000000"/><rect x="0" y="2" width="1" height="1" fill="#000000"/><rect x="1" y="2" width="1" height="1" fill="#ffffff"/><rect x="2" y="2" width="1" height="1" fill="#ffff00"/><rect x="3" y="2" width="1" height="1" fill="#ffffff"/><rect x="4" y="2" width="1" height="1" fill="#ffff00"/><rect x="5" y="2" width="1" height="1" fill="#ffffff"/><rect x="6" y="2" width="1" height="1" fill="#ffff00"/><rect x="7" y="2" width="1" height="1" fill="#ffffff"/><rect x="8" y="2" width="1" height="1" fill="#ffff00"/><rect x="9" y="2" width="1" height="1" fill="#ffffff"/><rect x="10" y="2" width="1" height="1" fill="#000000"/><rect x="0" y="3" width="1" height="1" fill="#000000"/><rect x="1" y="3" width="1" height="1" fill="#ffff00"/><rect x="2" y="3" width="1" height="1" fill="#ffffff"/><rect x="3" y="3" width="1" height="1" fill="#ffff00"/><rect x="4" y="3" width="1" height="1" fill="#ffffff"/><rect x="5" y="3" width="1" height="1" fill="#ffff00"/><rect x="6" y="3" width="1" height="1" fill="#ffffff"/><rect x="7" y="3" width="1" height="1" fill="#ffff00"/><rect x="8" y="3" width="1" height="1" fill="#ffffff"/><rect x="9" y="3" width="1" height="1" fill="#ffff00"/><rect x="10" y="3" width="1" height="1" fill="#000000"/><rect x="0" y="4" width="1" height="1" fill="#000000"/><rect x="1" y="4" width="1" height="1" fill="#ffffff"/><rect x="2" y="4" width="1" height="1" fill="#ffff00"/><rect x="3" y="4" width="1" height="1" fill="#ffffff"/><rect x="4" y="4" width="11" height="1" fill="#000000"/><rect x="0" y="5" width="1" height="1" fill="#000000"/><rect x="1" y="5" width="1" height="1" fill="#ffff00"/><rect x="2" y="5" width="1" height="1" fill="#ffffff"/><rect x="3" y="5" width="1" height="1" fill="#000000"/><rect x="4" y="5" width="9" height="1" fill="#808000"/><rect x="13" y="5" width="1" height="1" fill="#000000"/><rect x="0" y="6" width="1" height="1" fill="#000000"/><rect x="1" y="6" width="1" height="1" fill="#ffffff"/><rect x="2" y="6" width="1" height="1" fill="#000000"/><rect x="3" y="6" width="9" height="1" fill="#808000"/><rect x="12" y="6" width="1" height="1" fill="#000000"/><rect x="0" y="7" width="1" height="1" fill="#000000"/><rect x="1" y="7" width="1" height="1" fill="#ffff00"/><rect x="2" y="7" width="1" height="1" fill="#000000"/><rect x="3" y="7" width="8" height="1" fill="#808000"/><rect x="11" y="7" width="1" height="1" fill="#000000"/><rect x="0" y="8" width="2" height="1" fill="#000000"/><rect x="2" y="8" width="8" height="1" fill="#808000"/><rect x="10" y="8" width="1" height="1" fill="#000000"/><rect x="0" y="9" width="11" height="1" fill="#000000"/></svg>
<svg style="position:absolute;left:59px;top:56px" width="7" height="4" shape-rendering="crispEdges"><rect x="3" y="0" width="3" height="1" fill="#000000"/><rect x="0" y="1" width="1" height="1" fill="#000000"/><rect x="2" y="1" width="1" height="1" fill="#000000"/><rect x="6" y="1" width="1" height="1" fill="#000000"/><rect x="0" y="2" width="2" height="1" fill="#000000"/><rect x="0" y="3" width="3" height="1" fill="#000000"/></svg>
<svg style="position:absolute;left:52px;top:60px" width="15" height="10" shape-rendering="crispEdges"><rect x="1" y="0" width="3" height="1" fill="#000000"/><rect x="0" y="1" width="1" height="1" fill="#000000"/><rect x="1" y="1" width="1" height="1" fill="#ffff00"/><rect x="2" y="1" width="1" height="1" fill="#ffffff"/><rect x="3" y="1" width="1" height="1" fill="#ffff00"/><rect x="4" y="1" width="7" height="1" fill="#000000"/><rect x="0" y="2" width="1" height="1" fill="#000000"/><rect x="1" y="2" width="1" height="1" fill="#ffffff"/><rect x="2" y="2" width="1" height="1" fill="#ffff00"/><rect x="3" y="2" width="1" height="1" fill="#ffffff"/><rect x="4" y="2" width="1" height="1" fill="#ffff00"/><rect x="5" y="2" width="1" height="1" fill="#ffffff"/><rect x="6" y="2" width="1" height="1" fill="#ffff00"/><rect x="7" y="2" width="1" height="1" fill="#ffffff"/><rect x="8" y="2" width="1" height="1" fill="#ffff00"/><rect x="9" y="2" width="1" height="1" fill="#ffffff"/><rect x="10" y="2" width="1" height="1" fill="#000000"/><rect x="0" y="3" width="1" height="1" fill="#000000"/><rect x="1" y="3" width="1" height="1" fill="#ffff00"/><rect x="2" y="3" width="1" height="1" fill="#ffffff"/><rect x="3" y="3" width="1" height="1" fill="#ffff00"/><rect x="4" y="3" width="1" height="1" fill="#ffffff"/><rect x="5" y="3" width="1" height="1" fill="#ffff00"/><rect x="6" y="3" width="1" height="1" fill="#ffffff"/><rect x="7" y="3" width="1" height="1" fill="#ffff00"/><rect x="8" y="3" width="1" height="1" fill="#ffffff"/><rect x="9" y="3" width="1" height="1" fill="#ffff00"/><rect x="10" y="3" width="1" height="1" fill="#000000"/><rect x="0" y="4" width="1" height="1" fill="#000000"/><rect x="1" y="4" width="1" height="1" fill="#ffffff"/><rect x="2" y="4" width="1" height="1" fill="#ffff00"/><rect x="3" y="4" width="1" height="1" fill="#ffffff"/><rect x="4" y="4" width="11" height="1" fill="#000000"/><rect x="0" y="5" width="1" height="1" fill="#000000"/><rect x="1" y="5" width="1" height="1" fill="#ffff00"/><rect x="2" y="5" width="1" height="1" fill="#ffffff"/><rect x="3" y="5" width="1" height="1" fill="#000000"/><rect x="4" y="5" width="9" height="1" fill="#808000"/><rect x="13" y="5" width="1" height="1" fill="#000000"/><rect x="0" y="6" width="1" height="1" fill="#000000"/><rect x="1" y="6" width="1" height="1" fill="#ffffff"/><rect x="2" y="6" width="1" height="1" fill="#000000"/><rect x="3" y="6" width="9" height="1" fill="#808000"/><rect x="12" y="6" width="1" height="1" fill="#000000"/><rect x="0" y="7" width="1" height="1" fill="#000000"/><rect x="1" y="7" width="1" height="1" fill="#ffff00"/><rect x="2" y="7" width="1" height="1" fill="#000000"/><rect x="3" y="7" width="8" height="1" fill="#808000"/><rect x="11" y="7" width="1" height="1" fill="#000000"/><rect x="0" y="8" width="2" height="1" fill="#000000"/><rect x="2" y="8" width="8" height="1" fill="#808000"/><rect x="10" y="8" width="1" height="1" fill="#000000"/><rect x="0" y="9" width="11" height="1" fill="#000000"/></svg>
<svg style="position:absolute;left:72px;top:56px" width="14" height="14" shape-rendering="crispEdges"><rect x="0" y="0" width="14" height="1" fill="#000000"/><rect x="0" y="1" width="1" height="1" fill="#000000"/><rect x="1" y="1" width="12" height="1" fill="#ffe680"/><rect x="13" y="1" width="1" height="1" fill="#000000"/><rect x="0" y="2" width="1" height="1" fill="#000000"/><rect x="1" y="2" width="5" height="1" fill="#ffcc00"/><rect x="6" y="2" width="2" height="1" fill="#000000"/><rect x="8" y="2" width="5" height="1" fill="#ffcc00"/><rect x="13" y="2" width="1" height="1" fill="#000000"/><rect x="0" y="3" width="1" height="1" fill="#000000"/><rect x="1" y="3" width="12" height="1" fill="#e8a000"/><rect x="13" y="3" width="1" height="1" fill="#000000"/><rect x="0" y="4" width="14" height="1" fill="#000000"/><rect x="0" y="5" width="1" height="1" fill="#000000"/><rect x="1" y="5" width="12" height="1" fill="#ffe680"/><rect x="13" y="5" width="1" height="1" fill="#000000"/><rect x="0" y="6" width="1" height="1" fill="#000000"/><rect x="1" y="6" width="5" height="1" fill="#ffcc00"/><rect x="6" y="6" width="2" height="1" fill="#000000"/><rect x="8" y="6" width="5" height="1" fill="#ffcc00"/><rect x="13" y="6" width="1" height="1" fill="#000000"/><rect x="0" y="7" width="1" height="1" fill="#000000"/><rect x="1" y="7" width="12" height="1" fill="#e8a000"/><rect x="13" y="7" width="1" height="1" fill="#000000"/><rect x="0" y="8" width="14" height="1" fill="#000000"/><rect x="0" y="9" width="1" height="1" fill="#000000"/><rect x="1" y="9" width="12" height="1" fill="#ffe680"/><rect x="13" y="9" width="1" height="1" fill="#000000"/><rect x="0" y="10" width="1" height="1" fill="#000000"/><rect x="1" y="10" width="5" height="1" fill="#ffcc00"/><rect x="6" y="10" width="2" height="1" fill="#000000"/><rect x="8" y="10" width="5" height="1" fill="#ffcc00"/><rect x="13" y="10" width="1" height="1" fill="#000000"/><rect x="0" y="11" width="1" height="1" fill="#000000"/><rect x="1" y="11" width="12" height="1" fill="#e8a000"/><rect x="13" y="11" width="1" height="1" fill="#000000"/><rect x="0" y="12" width="14" height="1" fill="#000000"/><rect x="1" y="13" width="2" height="1" fill="#000000"/><rect x="11" y="13" width="2" height="1" fill="#000000"/></svg>
<svg style="position:absolute;left:92px;top:56px" width="15" height="16" shape-rendering="crispEdges"><rect x="1" y="1" width="2" height="1" fill="#ff0000"/><rect x="3" y="1" width="7" height="1" fill="#000000"/><rect x="12" y="1" width="2" height="1" fill="#ff0000"/><rect x="2" y="2" width="2" height="1" fill="#ff0000"/><rect x="4" y="2" width="5" height="1" fill="#ffffff"/><rect x="9" y="2" width="2" height="1" fill="#000000"/><rect x="11" y="2" width="2" height="1" fill="#ff0000"/><rect x="2" y="3" width="1" height="1" fill="#000000"/><rect x="3" y="3" width="2" height="1" fill="#ff0000"/><rect x="5" y="3" width="4" height="1" fill="#ffffff"/><rect x="9" y="3" width="1" height="1" fill="#000000"/><rect x="10" y="3" width="2" height="1" fill="#ff0000"/><rect x="2" y="4" width="1" height="1" fill="#000000"/><rect x="3" y="4" width="1" height="1" fill="#ffffff"/><rect x="4" y="4" width="2" height="1" fill="#ff0000"/><rect x="6" y="4" width="3" height="1" fill="#ffffff"/><rect x="9" y="4" width="2" height="1" fill="#ff0000"/><rect x="11" y="4" width="1" height="1" fill="#000000"/><rect x="2" y="5" width="1" height="1" fill="#000000"/><rect x="3" y="5" width="2" height="1" fill="#ffffff"/><rect x="5" y="5" width="3" height="1" fill="#ff0000"/><rect x="8" y="5" width="1" height="1" fill="#ffffff"/><rect x="9" y="5" width="2" height="1" fill="#ff0000"/><rect x="11" y="5" width="1" height="1" fill="#000000"/><rect x="2" y="6" width="1" height="1" fill="#000000"/><rect x="3" y="6" width="2" height="1" fill="#ffffff"/><rect x="5" y="6" width="5" height="1" fill="#ff0000"/><rect x="10" y="6" width="1" height="1" fill="#ffffff"/><rect x="11" y="6" width="1" height="1" fill="#000000"/><rect x="2" y="7" width="1" height="1" fill="#000000"/><rect x="3" y="7" width="2" height="1" fill="#ffffff"/><rect x="5" y="7" width="1" height="1" fill="#ff0000"/><rect x="6" y="7" width="1" height="1" fill="#ffffff"/><rect x="7" y="7" width="2" height="1" fill="#ff0000"/><rect x="9" y="7" width="2" height="1" fill="#ffffff"/><rect x="11" y="7" width="1" height="1" fill="#000000"/><rect x="2" y="8" width="1" height="1" fill="#000000"/><rect x="3" y="8" width="3" height="1" fill="#ffffff"/><rect x="6" y="8" width="4" height="1" fill="#ff0000"/><rect x="10" y="8" width="1" height="1" fill="#ffffff"/><rect x="11" y="8" width="1" height="1" fill="#000000"/><rect x="2" y="9" width="1" height="1" fill="#000000"/><rect x="3" y="9" width="2" height="1" fill="#ffffff"/><rect x="5" y="9" width="2" height="1" fill="#ff0000"/><rect x="7" y="9" width="2" height="1" fill="#ffffff"/><rect x="9" y="9" width="2" height="1" fill="#ff0000"/><rect x="11" y="9" width="1" height="1" fill="#000000"/><rect x="2" y="10" width="1" height="1" fill="#000000"/><rect x="3" y="10" width="1" height="1" fill="#ffffff"/><rect x="4" y="10" width="2" height="1" fill="#ff0000"/><rect x="6" y="10" width="4" height="1" fill="#ffffff"/><rect x="10" y="10" width="2" height="1" fill="#ff0000"/><rect x="2" y="11" width="1" height="1" fill="#000000"/><rect x="3" y="11" width="1" height="1" fill="#ffffff"/><rect x="4" y="11" width="2" height="1" fill="#ff0000"/><rect x="6" y="11" width="5" height="1" fill="#ffffff"/><rect x="11" y="11" width="2" height="1" fill="#ff0000"/><rect x="2" y="12" width="1" height="1" fill="#000000"/><rect x="3" y="12" width="2" height="1" fill="#ff0000"/><rect x="5" y="12" width="7" height="1" fill="#000000"/><rect x="12" y="12" width="1" height="1" fill="#ff0000"/><rect x="2" y="13" width="2" height="1" fill="#ff0000"/><rect x="2" y="14" width="1" height="1" fill="#ff0000"/></svg>
<svg style="position:absolute;left:121px;top:55px" width="15" height="16" shape-rendering="crispEdges"><rect x="6" y="1" width="8" height="1" fill="#000000"/><rect x="3" y="2" width="8" height="1" fill="#000000"/><rect x="11" y="2" width="2" height="1" fill="#ffffff"/><rect x="13" y="2" width="1" height="1" fill="#000000"/><rect x="3" y="3" width="1" height="1" fill="#000000"/><rect x="4" y="3" width="1" height="1" fill="#ffff00"/><rect x="5" y="3" width="5" height="1" fill="#ffffff"/><rect x="10" y="3" width="1" height="1" fill="#000000"/><rect x="11" y="3" width="2" height="1" fill="#ffffff"/><rect x="13" y="3" width="1" height="1" fill="#000000"/><rect x="3" y="4" width="1" height="1" fill="#000000"/><rect x="4" y="4" width="2" height="1" fill="#ffffff"/><rect x="6" y="4" width="1" height="1" fill="#ffff00"/><rect x="7" y="4" width="1" height="1" fill="#ffffff"/><rect x="8" y="4" width="1" height="1" fill="#000000"/><rect x="9" y="4" width="1" height="1" fill="#ffffff"/><rect x="10" y="4" width="1" height="1" fill="#000000"/><rect x="11" y="4" width="2" height="1" fill="#ffffff"/><rect x="13" y="4" width="1" height="1" fill="#000000"/><rect x="1" y="5" width="7" height="1" fill="#000000"/><rect x="8" y="5" width="2" height="1" fill="#ffffff"/><rect x="10" y="5" width="1" height="1" fill="#000000"/><rect x="11" y="5" width="1" height="1" fill="#ffffff"/><rect x="12" y="5" width="1" height="1" fill="#00a000"/><rect x="13" y="5" width="1" height="1" fill="#000000"/><rect x="1" y="6" width="1" height="1" fill="#000000"/><rect x="2" y="6" width="5" height="1" fill="#ffffff"/><rect x="7" y="6" width="1" height="1" fill="#000000"/><rect x="9" y="6" width="1" height="1" fill="#ffffff"/><rect x="10" y="6" width="1" height="1" fill="#000000"/><rect x="11" y="6" width="2" height="1" fill="#ffffff"/><rect x="13" y="6" width="1" height="1" fill="#000000"/><rect x="1" y="7" width="1" height="1" fill="#000000"/><rect x="2" y="7" width="1" height="1" fill="#ffffff"/><rect x="3" y="7" width="1" height="1" fill="#000000"/><rect x="4" y="7" width="4" height="1" fill="#ffffff"/><rect x="8" y="7" width="3" height="1" fill="#000000"/><rect x="11" y="7" width="1" height="1" fill="#ffffff"/><rect x="12" y="7" width="1" height="1" fill="#00a000"/><rect x="13" y="7" width="1" height="1" fill="#000000"/><rect x="1" y="8" width="1" height="1" fill="#000000"/><rect x="2" y="8" width="7" height="1" fill="#ffffff"/><rect x="9" y="8" width="2" height="1" fill="#000000"/><rect x="11" y="8" width="2" height="1" fill="#ffffff"/><rect x="13" y="8" width="1" height="1" fill="#000000"/><rect x="1" y="9" width="1" height="1" fill="#000000"/><rect x="2" y="9" width="1" height="1" fill="#ffffff"/><rect x="3" y="9" width="2" height="1" fill="#000000"/><rect x="5" y="9" width="4" height="1" fill="#ffffff"/><rect x="9" y="9" width="2" height="1" fill="#000000"/><rect x="11" y="9" width="1" height="1" fill="#ffffff"/><rect x="12" y="9" width="1" height="1" fill="#00a000"/><rect x="13" y="9" width="1" height="1" fill="#000000"/><rect x="1" y="10" width="1" height="1" fill="#000000"/><rect x="2" y="10" width="7" height="1" fill="#ffffff"/><rect x="9" y="10" width="2" height="1" fill="#000000"/><rect x="11" y="10" width="2" height="1" fill="#ffffff"/><rect x="13" y="10" width="1" height="1" fill="#000000"/><rect x="1" y="11" width="1" height="1" fill="#000000"/><rect x="2" y="11" width="1" height="1" fill="#ffffff"/><rect x="3" y="11" width="5" height="1" fill="#000000"/><rect x="8" y="11" width="1" height="1" fill="#ffffff"/><rect x="9" y="11" width="2" height="1" fill="#000000"/><rect x="11" y="11" width="2" height="1" fill="#ffffff"/><rect x="13" y="11" width="1" height="1" fill="#000000"/><rect x="1" y="12" width="1" height="1" fill="#000000"/><rect x="2" y="12" width="7" height="1" fill="#ffffff"/><rect x="9" y="12" width="5" height="1" fill="#000000"/><rect x="1" y="13" width="1" height="1" fill="#000000"/><rect x="2" y="13" width="1" height="1" fill="#ffffff"/><rect x="3" y="13" width="1" height="1" fill="#000000"/><rect x="4" y="13" width="1" height="1" fill="#ffffff"/><rect x="5" y="13" width="1" height="1" fill="#000000"/><rect x="6" y="13" width="1" height="1" fill="#ffffff"/><rect x="7" y="13" width="1" height="1" fill="#000000"/><rect x="8" y="13" width="1" height="1" fill="#ffffff"/><rect x="9" y="13" width="1" height="1" fill="#000000"/><rect x="1" y="14" width="1" height="1" fill="#000000"/><rect x="2" y="14" width="7" height="1" fill="#ffffff"/><rect x="9" y="14" width="1" height="1" fill="#000000"/><rect x="1" y="15" width="9" height="1" fill="#000000"/></svg>
<svg style="position:absolute;left:152px;top:56px" width="15" height="14" shape-rendering="crispEdges"><rect x="3" y="0" width="3" height="1" fill="#1c1c88"/><rect x="3" y="1" width="3" height="1" fill="#1c1c88"/><rect x="3" y="2" width="3" height="1" fill="#1c1c88"/><rect x="0" y="3" width="9" height="1" fill="#1c1c88"/><rect x="0" y="4" width="9" height="1" fill="#1c1c88"/><rect x="0" y="5" width="9" height="1" fill="#1c1c88"/><rect x="3" y="6" width="3" height="1" fill="#1c1c88"/><rect x="3" y="7" width="3" height="1" fill="#1c1c88"/><rect x="6" y="7" width="1" height="1" fill="#000000"/><rect x="9" y="7" width="2" height="1" fill="#000000"/><rect x="13" y="7" width="2" height="1" fill="#000000"/><rect x="3" y="8" width="3" height="1" fill="#1c1c88"/><rect x="14" y="8" width="1" height="1" fill="#000000"/><rect x="5" y="9" width="1" height="1" fill="#000000"/><rect x="7" y="9" width="6" height="1" fill="#ff9900"/><rect x="7" y="10" width="6" height="1" fill="#ff9900"/><rect x="7" y="11" width="6" height="1" fill="#ff9900"/><rect x="14" y="11" width="1" height="1" fill="#000000"/><rect x="5" y="12" width="1" height="1" fill="#000000"/><rect x="14" y="12" width="1" height="1" fill="#000000"/><rect x="5" y="13" width="2" height="1" fill="#000000"/><rect x="9" y="13" width="2" height="1" fill="#000000"/><rect x="13" y="13" width="2" height="1" fill="#000000"/></svg>
<svg style="position:absolute;left:172px;top:55px" width="15" height="14" shape-rendering="crispEdges"><rect x="7" y="0" width="1" height="1" fill="#000000"/><rect x="9" y="0" width="1" height="1" fill="#000000"/><rect x="8" y="1" width="2" height="1" fill="#000000"/><rect x="6" y="2" width="2" height="1" fill="#000000"/><rect x="5" y="3" width="2" height="1" fill="#000000"/><rect x="8" y="3" width="5" height="1" fill="#000000"/><rect x="13" y="3" width="2" height="1" fill="#1c1c88"/><rect x="4" y="4" width="1" height="1" fill="#000000"/><rect x="5" y="4" width="1" height="1" fill="#ffcc99"/><rect x="6" y="4" width="2" height="1" fill="#000000"/><rect x="8" y="4" width="5" height="1" fill="#ffffff"/><rect x="13" y="4" width="2" height="1" fill="#1c1c88"/><rect x="0" y="5" width="3" height="1" fill="#000000"/><rect x="4" y="5" width="1" height="1" fill="#ffcc99"/><rect x="5" y="5" width="1" height="1" fill="#000000"/><rect x="6" y="5" width="1" height="1" fill="#ffcc99"/><rect x="7" y="5" width="1" height="1" fill="#000000"/><rect x="8" y="5" width="5" height="1" fill="#ffcc99"/><rect x="13" y="5" width="2" height="1" fill="#1c1c88"/><rect x="3" y="6" width="1" height="1" fill="#ffcc99"/><rect x="4" y="6" width="1" height="1" fill="#000000"/><rect x="5" y="6" width="1" height="1" fill="#ffcc99"/><rect x="6" y="6" width="1" height="1" fill="#000000"/><rect x="7" y="6" width="1" height="1" fill="#ffcc99"/><rect x="8" y="6" width="1" height="1" fill="#000000"/><rect x="9" y="6" width="4" height="1" fill="#ffcc99"/><rect x="13" y="6" width="2" height="1" fill="#1c1c88"/><rect x="0" y="7" width="2" height="1" fill="#000000"/><rect x="3" y="7" width="1" height="1" fill="#000000"/><rect x="4" y="7" width="1" height="1" fill="#ffcc99"/><rect x="5" y="7" width="1" height="1" fill="#000000"/><rect x="6" y="7" width="1" height="1" fill="#ffcc99"/><rect x="7" y="7" width="1" height="1" fill="#000000"/><rect x="8" y="7" width="1" height="1" fill="#ffcc99"/><rect x="9" y="7" width="1" height="1" fill="#000000"/><rect x="10" y="7" width="3" height="1" fill="#ffcc99"/><rect x="13" y="7" width="2" height="1" fill="#1c1c88"/><rect x="4" y="8" width="1" height="1" fill="#000000"/><rect x="5" y="8" width="1" height="1" fill="#ffcc99"/><rect x="6" y="8" width="1" height="1" fill="#000000"/><rect x="7" y="8" width="1" height="1" fill="#ffcc99"/><rect x="8" y="8" width="1" height="1" fill="#000000"/><rect x="9" y="8" width="1" height="1" fill="#ffcc99"/><rect x="10" y="8" width="3" height="1" fill="#000000"/><rect x="13" y="8" width="2" height="1" fill="#1c1c88"/><rect x="4" y="9" width="2" height="1" fill="#000000"/><rect x="6" y="9" width="1" height="1" fill="#ffcc99"/><rect x="7" y="9" width="1" height="1" fill="#000000"/><rect x="8" y="9" width="1" height="1" fill="#ffcc99"/><rect x="9" y="9" width="1" height="1" fill="#000000"/><rect x="13" y="9" width="2" height="1" fill="#1c1c88"/><rect x="0" y="10" width="3" height="1" fill="#ff0000"/><rect x="3" y="10" width="1" height="1" fill="#000000"/><rect x="4" y="10" width="2" height="1" fill="#ff0000"/><rect x="6" y="10" width="1" height="1" fill="#000000"/><rect x="7" y="10" width="1" height="1" fill="#ffcc99"/><rect x="8" y="10" width="1" height="1" fill="#000000"/><rect x="13" y="10" width="2" height="1" fill="#1c1c88"/><rect x="0" y="11" width="3" height="1" fill="#ff0000"/><rect x="3" y="11" width="1" height="1" fill="#000000"/><rect x="4" y="11" width="3" height="1" fill="#ff0000"/><rect x="7" y="11" width="1" height="1" fill="#000000"/><rect x="0" y="13" width="4" height="1" fill="#000000"/><rect x="6" y="13" width="1" height="1" fill="#000000"/></svg>
<svg style="position:absolute;left:191px;top:54px" width="17" height="17" shape-rendering="crispEdges"><rect x="14" y="2" width="1" height="1" fill="#ff0000"/><rect x="6" y="3" width="1" height="1" fill="#ff0000"/><rect x="13" y="3" width="1" height="1" fill="#ff0000"/><rect x="1" y="4" width="2" height="1" fill="#000000"/><rect x="7" y="4" width="2" height="1" fill="#ff0000"/><rect x="12" y="4" width="2" height="1" fill="#ff0000"/><rect x="1" y="5" width="1" height="1" fill="#000000"/><rect x="8" y="5" width="2" height="1" fill="#ff0000"/><rect x="11" y="5" width="2" height="1" fill="#ff0000"/><rect x="1" y="6" width="1" height="1" fill="#000000"/><rect x="3" y="6" width="4" height="1" fill="#ff9900"/><rect x="9" y="6" width="3" height="1" fill="#ff0000"/><rect x="3" y="7" width="4" height="1" fill="#ff9900"/><rect x="7" y="7" width="1" height="1" fill="#ffffff"/><rect x="8" y="7" width="1" height="1" fill="#ff9900"/><rect x="9" y="7" width="4" height="1" fill="#ff0000"/><rect x="3" y="8" width="3" height="1" fill="#ff9900"/><rect x="6" y="8" width="1" height="1" fill="#ffffff"/><rect x="7" y="8" width="1" height="1" fill="#ff9900"/><rect x="8" y="8" width="2" height="1" fill="#ff0000"/><rect x="12" y="8" width="2" height="1" fill="#ff0000"/><rect x="1" y="9" width="1" height="1" fill="#000000"/><rect x="3" y="9" width="3" height="1" fill="#ff9900"/><rect x="6" y="9" width="1" height="1" fill="#ffffff"/><rect x="7" y="9" width="2" height="1" fill="#ff0000"/><rect x="9" y="9" width="2" height="1" fill="#ff9900"/><rect x="13" y="9" width="2" height="1" fill="#ff0000"/><rect x="1" y="10" width="1" height="1" fill="#000000"/><rect x="3" y="10" width="2" height="1" fill="#ff9900"/><rect x="5" y="10" width="1" height="1" fill="#ffffff"/><rect x="6" y="10" width="2" height="1" fill="#ff0000"/><rect x="8" y="10" width="3" height="1" fill="#ff9900"/><rect x="14" y="10" width="1" height="1" fill="#ff0000"/><rect x="1" y="11" width="1" height="1" fill="#000000"/><rect x="3" y="11" width="1" height="1" fill="#ff9900"/><rect x="4" y="11" width="1" height="1" fill="#ffffff"/><rect x="5" y="11" width="1" height="1" fill="#ff0000"/><rect x="6" y="11" width="5" height="1" fill="#ff9900"/><rect x="15" y="11" width="1" height="1" fill="#ff0000"/><rect x="3" y="12" width="8" height="1" fill="#ff9900"/><rect x="1" y="13" width="1" height="1" fill="#000000"/><rect x="3" y="13" width="8" height="1" fill="#ff9900"/><rect x="12" y="13" width="1" height="1" fill="#000000"/><rect x="1" y="14" width="2" height="1" fill="#000000"/><rect x="5" y="14" width="4" height="1" fill="#000000"/><rect x="11" y="14" width="2" height="1" fill="#000000"/></svg>
<svg style="position:absolute;left:224px;top:56px" width="10" height="14" shape-rendering="crispEdges"><rect x="4" y="0" width="1" height="1" fill="#1c1c88"/><rect x="4" y="1" width="2" height="1" fill="#1c1c88"/><rect x="2" y="2" width="5" height="1" fill="#1c1c88"/><rect x="1" y="3" width="7" height="1" fill="#1c1c88"/><rect x="0" y="4" width="7" height="1" fill="#1c1c88"/><rect x="0" y="5" width="3" height="1" fill="#1c1c88"/><rect x="4" y="5" width="2" height="1" fill="#1c1c88"/><rect x="0" y="6" width="3" height="1" fill="#1c1c88"/><rect x="4" y="6" width="1" height="1" fill="#1c1c88"/><rect x="5" y="7" width="1" height="1" fill="#1c1c88"/><rect x="7" y="7" width="3" height="1" fill="#1c1c88"/><rect x="4" y="8" width="2" height="1" fill="#1c1c88"/><rect x="7" y="8" width="3" height="1" fill="#1c1c88"/><rect x="3" y="9" width="7" height="1" fill="#1c1c88"/><rect x="2" y="10" width="7" height="1" fill="#1c1c88"/><rect x="3" y="11" width="5" height="1" fill="#1c1c88"/><rect x="4" y="12" width="2" height="1" fill="#1c1c88"/><rect x="5" y="13" width="1" height="1" fill="#1c1c88"/></svg>
<svg style="position:absolute;left:882px;top:54px" width="18" height="18" shape-rendering="crispEdges"><rect x="1" y="1" width="7" height="1" fill="#eeeeee"/><rect x="8" y="1" width="5" height="1" fill="#8a8a8a"/><rect x="13" y="1" width="4" height="1" fill="#eeeeee"/><rect x="1" y="2" width="6" height="1" fill="#eeeeee"/><rect x="7" y="2" width="1" height="1" fill="#8a8a8a"/><rect x="8" y="2" width="5" height="1" fill="#6b6b6b"/><rect x="13" y="2" width="2" height="1" fill="#1cb4ad"/><rect x="15" y="2" width="2" height="1" fill="#eeeeee"/><rect x="1" y="3" width="6" height="1" fill="#eeeeee"/><rect x="7" y="3" width="1" height="1" fill="#8a8a8a"/><rect x="8" y="3" width="1" height="1" fill="#6b6b6b"/><rect x="9" y="3" width="2" height="1" fill="#a8a8a8"/><rect x="11" y="3" width="1" height="1" fill="#6b6b6b"/><rect x="12" y="3" width="3" height="1" fill="#1cb4ad"/><rect x="15" y="3" width="1" height="1" fill="#006b66"/><rect x="16" y="3" width="1" height="1" fill="#eeeeee"/><rect x="1" y="4" width="5" height="1" fill="#eeeeee"/><rect x="6" y="4" width="1" height="1" fill="#006b66"/><rect x="7" y="4" width="2" height="1" fill="#6b6b6b"/><rect x="9" y="4" width="2" height="1" fill="#a8a8a8"/><rect x="11" y="4" width="1" height="1" fill="#6b6b6b"/><rect x="12" y="4" width="3" height="1" fill="#1cb4ad"/><rect x="15" y="4" width="1" height="1" fill="#006b66"/><rect x="16" y="4" width="1" height="1" fill="#eeeeee"/><rect x="1" y="5" width="4" height="1" fill="#eeeeee"/><rect x="5" y="5" width="1" height="1" fill="#006b66"/><rect x="6" y="5" width="1" height="1" fill="#1cb4ad"/><rect x="7" y="5" width="1" height="1" fill="#006b66"/><rect x="8" y="5" width="3" height="1" fill="#6b6b6b"/><rect x="11" y="5" width="4" height="1" fill="#1cb4ad"/><rect x="15" y="5" width="1" height="1" fill="#006b66"/><rect x="16" y="5" width="1" height="1" fill="#eeeeee"/><rect x="1" y="6" width="1" height="1" fill="#eeeeee"/><rect x="2" y="6" width="4" height="1" fill="#006b66"/><rect x="6" y="6" width="1" height="1" fill="#1cb4ad"/><rect x="7" y="6" width="1" height="1" fill="#b8c8ff"/><rect x="8" y="6" width="1" height="1" fill="#1cb4ad"/><rect x="9" y="6" width="1" height="1" fill="#006b66"/><rect x="10" y="6" width="1" height="1" fill="#6b6b6b"/><rect x="11" y="6" width="2" height="1" fill="#1cb4ad"/><rect x="13" y="6" width="1" height="1" fill="#004a46"/><rect x="14" y="6" width="1" height="1" fill="#1cb4ad"/><rect x="15" y="6" width="1" height="1" fill="#006b66"/><rect x="16" y="6" width="1" height="1" fill="#eeeeee"/><rect x="1" y="7" width="1" height="1" fill="#006b66"/><rect x="2" y="7" width="1" height="1" fill="#1cb4ad"/><rect x="3" y="7" width="3" height="1" fill="#b8c8ff"/><rect x="6" y="7" width="1" height="1" fill="#1cb4ad"/><rect x="7" y="7" width="1" height="1" fill="#b8c8ff"/><rect x="8" y="7" width="2" height="1" fill="#1cb4ad"/><rect x="10" y="7" width="1" height="1" fill="#006b66"/><rect x="11" y="7" width="4" height="1" fill="#1cb4ad"/><rect x="15" y="7" width="1" height="1" fill="#006b66"/><rect x="16" y="7" width="1" height="1" fill="#eeeeee"/><rect x="1" y="8" width="1" height="1" fill="#006b66"/><rect x="2" y="8" width="5" height="1" fill="#1cb4ad"/><rect x="7" y="8" width="1" height="1" fill="#b8c8ff"/><rect x="8" y="8" width="2" height="1" fill="#1cb4ad"/><rect x="10" y="8" width="1" height="1" fill="#006b66"/><rect x="11" y="8" width="2" height="1" fill="#1cb4ad"/><rect x="13" y="8" width="1" height="1" fill="#004a46"/><rect x="14" y="8" width="1" height="1" fill="#1cb4ad"/><rect x="15" y="8" width="1" height="1" fill="#006b66"/><rect x="16" y="8" width="1" height="1" fill="#eeeeee"/><rect x="1" y="9" width="1" height="1" fill="#eeeeee"/><rect x="2" y="9" width="4" height="1" fill="#006b66"/><rect x="6" y="9" width="3" height="1" fill="#1cb4ad"/><rect x="9" y="9" width="1" height="1" fill="#006b66"/><rect x="10" y="9" width="1" height="1" fill="#6b6b6b"/><rect x="11" y="9" width="4" height="1" fill="#1cb4ad"/><rect x="15" y="9" width="1" height="1" fill="#006b66"/><rect x="16" y="9" width="1" height="1" fill="#eeeeee"/><rect x="1" y="10" width="4" height="1" fill="#eeeeee"/><rect x="5" y="10" width="1" height="1" fill="#006b66"/><rect x="6" y="10" width="2" height="1" fill="#1cb4ad"/><rect x="8" y="10" width="1" height="1" fill="#006b66"/><rect x="9" y="10" width="2" height="1" fill="#6b6b6b"/><rect x="11" y="10" width="2" height="1" fill="#1cb4ad"/><rect x="13" y="10" width="1" height="1" fill="#004a46"/><rect x="14" y="10" width="1" height="1" fill="#1cb4ad"/><rect x="15" y="10" width="1" height="1" fill="#006b66"/><rect x="16" y="10" width="1" height="1" fill="#eeeeee"/><rect x="1" y="11" width="5" height="1" fill="#eeeeee"/><rect x="6" y="11" width="2" height="1" fill="#006b66"/><rect x="8" y="11" width="3" height="1" fill="#6b6b6b"/><rect x="11" y="11" width="4" height="1" fill="#1cb4ad"/><rect x="15" y="11" width="1" height="1" fill="#006b66"/><rect x="16" y="11" width="1" height="1" fill="#eeeeee"/><rect x="1" y="12" width="6" height="1" fill="#eeeeee"/><rect x="7" y="12" width="1" height="1" fill="#8a8a8a"/><rect x="8" y="12" width="3" height="1" fill="#6b6b6b"/><rect x="11" y="12" width="2" height="1" fill="#1cb4ad"/><rect x="13" y="12" width="1" height="1" fill="#004a46"/><rect x="14" y="12" width="1" height="1" fill="#1cb4ad"/><rect x="15" y="12" width="1" height="1" fill="#006b66"/><rect x="16" y="12" width="1" height="1" fill="#eeeeee"/><rect x="1" y="13" width="1" height="1" fill="#eeeeee"/><rect x="2" y="13" width="6" height="1" fill="#8a8a8a"/><rect x="8" y="13" width="3" height="1" fill="#eeeeee"/><rect x="11" y="13" width="4" height="1" fill="#1cb4ad"/><rect x="15" y="13" width="1" height="1" fill="#006b66"/><rect x="16" y="13" width="1" height="1" fill="#eeeeee"/><rect x="1" y="14" width="10" height="1" fill="#eeeeee"/><rect x="11" y="14" width="4" height="1" fill="#1cb4ad"/><rect x="15" y="14" width="2" height="1" fill="#eeeeee"/><rect x="1" y="15" width="10" height="1" fill="#eeeeee"/><rect x="11" y="15" width="3" height="1" fill="#1cb4ad"/><rect x="14" y="15" width="3" height="1" fill="#eeeeee"/><rect x="1" y="16" width="10" height="1" fill="#eeeeee"/><rect x="11" y="16" width="2" height="1" fill="#1cb4ad"/><rect x="13" y="16" width="4" height="1" fill="#eeeeee"/></svg>
<svg style="position:absolute;left:6px;top:5px" width="17" height="16" shape-rendering="crispEdges"><rect x="4" y="1" width="9" height="1" fill="#000000"/><rect x="4" y="2" width="1" height="1" fill="#000000"/><rect x="5" y="2" width="7" height="1" fill="#ffffff"/><rect x="12" y="2" width="2" height="1" fill="#000000"/><rect x="4" y="3" width="1" height="1" fill="#000000"/><rect x="5" y="3" width="1" height="1" fill="#ff0000"/><rect x="6" y="3" width="1" height="1" fill="#ffffff"/><rect x="7" y="3" width="1" height="1" fill="#ff0000"/><rect x="8" y="3" width="1" height="1" fill="#ffffff"/><rect x="9" y="3" width="1" height="1" fill="#ff0000"/><rect x="10" y="3" width="1" height="1" fill="#ffffff"/><rect x="11" y="3" width="1" height="1" fill="#ff0000"/><rect x="12" y="3" width="1" height="1" fill="#000000"/><rect x="13" y="3" width="1" height="1" fill="#ffffff"/><rect x="14" y="3" width="1" height="1" fill="#000000"/><rect x="2" y="4" width="6" height="1" fill="#000000"/><rect x="8" y="4" width="3" height="1" fill="#ffffff"/><rect x="11" y="4" width="1" height="1" fill="#00a000"/><rect x="12" y="4" width="3" height="1" fill="#ffffff"/><rect x="15" y="4" width="1" height="1" fill="#000000"/><rect x="1" y="5" width="1" height="1" fill="#000000"/><rect x="2" y="5" width="5" height="1" fill="#ffffff"/><rect x="7" y="5" width="1" height="1" fill="#000000"/><rect x="8" y="5" width="2" height="1" fill="#ffffff"/><rect x="10" y="5" width="3" height="1" fill="#00a000"/><rect x="13" y="5" width="2" height="1" fill="#ffffff"/><rect x="15" y="5" width="1" height="1" fill="#000000"/><rect x="0" y="6" width="1" height="1" fill="#000000"/><rect x="1" y="6" width="4" height="1" fill="#ffffff"/><rect x="5" y="6" width="2" height="1" fill="#ffff00"/><rect x="7" y="6" width="1" height="1" fill="#000000"/><rect x="8" y="6" width="1" height="1" fill="#ffffff"/><rect x="9" y="6" width="1" height="1" fill="#000000"/><rect x="10" y="6" width="3" height="1" fill="#00a000"/><rect x="13" y="6" width="2" height="1" fill="#ffffff"/><rect x="15" y="6" width="1" height="1" fill="#000000"/><rect x="1" y="7" width="1" height="1" fill="#000000"/><rect x="2" y="7" width="1" height="1" fill="#ffffff"/><rect x="3" y="7" width="4" height="1" fill="#ffff00"/><rect x="7" y="7" width="1" height="1" fill="#000000"/><rect x="8" y="7" width="3" height="1" fill="#ffffff"/><rect x="11" y="7" width="1" height="1" fill="#00a000"/><rect x="12" y="7" width="3" height="1" fill="#ffffff"/><rect x="15" y="7" width="1" height="1" fill="#000000"/><rect x="2" y="8" width="5" height="1" fill="#000000"/><rect x="7" y="8" width="3" height="1" fill="#ffffff"/><rect x="10" y="8" width="3" height="1" fill="#00a000"/><rect x="13" y="8" width="2" height="1" fill="#ffffff"/><rect x="15" y="8" width="1" height="1" fill="#000000"/><rect x="0" y="9" width="1" height="1" fill="#000000"/><rect x="1" y="9" width="1" height="1" fill="#ffffff"/><rect x="2" y="9" width="3" height="1" fill="#000000"/><rect x="5" y="9" width="1" height="1" fill="#ffff00"/><rect x="6" y="9" width="1" height="1" fill="#000000"/><rect x="7" y="9" width="2" height="1" fill="#ffffff"/><rect x="9" y="9" width="1" height="1" fill="#000000"/><rect x="10" y="9" width="3" height="1" fill="#00a000"/><rect x="13" y="9" width="2" height="1" fill="#ffffff"/><rect x="15" y="9" width="1" height="1" fill="#000000"/><rect x="1" y="10" width="1" height="1" fill="#000000"/><rect x="2" y="10" width="1" height="1" fill="#ffffff"/><rect x="3" y="10" width="3" height="1" fill="#ffff00"/><rect x="6" y="10" width="1" height="1" fill="#000000"/><rect x="7" y="10" width="4" height="1" fill="#ffffff"/><rect x="11" y="10" width="1" height="1" fill="#00a000"/><rect x="12" y="10" width="3" height="1" fill="#ffffff"/><rect x="15" y="10" width="1" height="1" fill="#000000"/><rect x="2" y="11" width="4" height="1" fill="#000000"/><rect x="6" y="11" width="4" height="1" fill="#ffffff"/><rect x="10" y="11" width="3" height="1" fill="#00a000"/><rect x="13" y="11" width="2" height="1" fill="#ffffff"/><rect x="15" y="11" width="1" height="1" fill="#000000"/><rect x="0" y="12" width="1" height="1" fill="#000000"/><rect x="1" y="12" width="1" height="1" fill="#ffffff"/><rect x="2" y="12" width="3" height="1" fill="#000000"/><rect x="5" y="12" width="1" height="1" fill="#ffff00"/><rect x="6" y="12" width="1" height="1" fill="#000000"/><rect x="7" y="12" width="2" height="1" fill="#ffffff"/><rect x="9" y="12" width="1" height="1" fill="#000000"/><rect x="10" y="12" width="3" height="1" fill="#00a000"/><rect x="13" y="12" width="2" height="1" fill="#ffffff"/><rect x="15" y="12" width="1" height="1" fill="#000000"/><rect x="1" y="13" width="1" height="1" fill="#000000"/><rect x="2" y="13" width="1" height="1" fill="#ffffff"/><rect x="3" y="13" width="3" height="1" fill="#ffff00"/><rect x="6" y="13" width="1" height="1" fill="#000000"/><rect x="7" y="13" width="4" height="1" fill="#ffffff"/><rect x="11" y="13" width="1" height="1" fill="#00a000"/><rect x="12" y="13" width="3" height="1" fill="#ffffff"/><rect x="15" y="13" width="1" height="1" fill="#000000"/><rect x="2" y="14" width="5" height="1" fill="#000000"/><rect x="7" y="14" width="8" height="1" fill="#ffffff"/><rect x="15" y="14" width="1" height="1" fill="#000000"/><rect x="6" y="15" width="10" height="1" fill="#000000"/></svg>
<div style="position:absolute;left:0;top:0;width:913px;height:551px;will-change:transform"><div class="t" style="left:30.00px;top:6px;font-weight:bold;font-style:normal;font-size:11px;color:#fff;letter-spacing:0.000px;transform:scaleX(0.725);transform-origin:0 0;-webkit-text-stroke:0.3px #fff;-webkit-text-stroke:0.6px #fff">B</div><div class="t" style="left:37.80px;top:6px;font-weight:bold;font-style:normal;font-size:11px;color:#fff;letter-spacing:0.000px;transform:scaleX(0.763);transform-origin:0 0;-webkit-text-stroke:0.3px #fff;-webkit-text-stroke:0.6px #fff">G</div><div class="t" style="left:55.80px;top:6px;font-weight:bold;font-style:normal;font-size:11px;color:#fff;letter-spacing:-0.156px;-webkit-text-stroke:0.3px #fff">биллинг</div><div class="t" style="left:119.40px;top:6px;font-weight:bold;font-style:normal;font-size:11px;color:#fff;letter-spacing:0.278px;-webkit-text-stroke:0.3px #fff">универсальная</div><div class="t" style="left:212.30px;top:6px;font-weight:bold;font-style:normal;font-size:11px;color:#fff;letter-spacing:-0.103px;-webkit-text-stroke:0.3px #fff">биллинговая</div><div class="t" style="left:287.90px;top:6px;font-weight:bold;font-style:normal;font-size:11px;color:#fff;letter-spacing:0.108px;-webkit-text-stroke:0.3px #fff">система</div><div class="t" style="left:338.20px;top:6px;font-weight:bold;font-style:normal;font-size:11px;color:#fff;letter-spacing:0.446px;-webkit-text-stroke:0.3px #fff">(вер.</div><div class="t" style="left:370.20px;top:6px;font-weight:bold;font-style:normal;font-size:11px;color:#fff;letter-spacing:0.263px;-webkit-text-stroke:0.3px #fff">3.0</div><div class="t" style="left:390.00px;top:6px;font-weight:bold;font-style:normal;font-size:11px;color:#fff;letter-spacing:0.221px;-webkit-text-stroke:0.3px #fff">alfa</div><div class="t" style="left:413.80px;top:6px;font-weight:bold;font-style:normal;font-size:11px;color:#fff;letter-spacing:0.655px;-webkit-text-stroke:0.3px #fff">от</div><div class="t" style="left:430.50px;top:6px;font-weight:bold;font-style:normal;font-size:11px;color:#fff;letter-spacing:0.825px;-webkit-text-stroke:0.3px #fff">29.10.2004)</div><div class="t" style="left:501.10px;top:6px;font-weight:bold;font-style:normal;font-size:11px;color:#fff;letter-spacing:0.635px;-webkit-text-stroke:0.3px #fff">Тестовая</div><div class="t" style="left:559.40px;top:6px;font-weight:bold;font-style:normal;font-size:11px;color:#fff;letter-spacing:0.053px;-webkit-text-stroke:0.3px #fff">версия</div><div class="t" style="left:10.00px;top:28px;font-weight:bold;font-style:normal;font-size:12px;color:#000;letter-spacing:-0.291px;-webkit-text-stroke:0.3px #000">Договор</div><div class="t" style="left:70.50px;top:28px;font-weight:bold;font-style:normal;font-size:12px;color:#000;letter-spacing:-0.114px;-webkit-text-stroke:0.3px #000">Модули</div><div class="t" style="left:129.60px;top:28px;font-weight:bold;font-style:normal;font-size:12px;color:#000;letter-spacing:-0.237px;-webkit-text-stroke:0.3px #000">Справочники</div><div class="t" style="left:218.60px;top:28px;font-weight:bold;font-style:normal;font-size:12px;color:#000;letter-spacing:-0.405px;-webkit-text-stroke:0.3px #000">Сервис</div><div class="t" style="left:273.40px;top:28px;font-weight:bold;font-style:normal;font-size:12px;color:#000;letter-spacing:-0.566px;-webkit-text-stroke:0.3px #000">Утилиты</div><div class="t" style="left:334.00px;top:28px;font-weight:bold;font-style:normal;font-size:12px;color:#000;letter-spacing:-0.217px;-webkit-text-stroke:0.3px #000">Справка</div><div class="t" style="left:248.90px;top:56px;font-weight:bold;font-style:normal;font-size:12px;color:#000;letter-spacing:-0.487px;-webkit-text-stroke:0.3px #000">БД:</div><div class="t" style="left:276.90px;top:56px;font-weight:bold;font-style:normal;font-size:12px;color:#000;letter-spacing:-0.295px;-webkit-text-stroke:0.3px #000">MyServer</div><div class="t" style="left:29.70px;top:528px;font-weight:bold;font-style:normal;font-size:12px;color:#000;letter-spacing:-0.129px;-webkit-text-stroke:0.3px #000">Планировщик заданий</div><div class="t" style="left:18.00px;top:85px;font-weight:bold;font-style:normal;font-size:12px;color:#000;letter-spacing:-0.099px;-webkit-text-stroke:0.3px #000">Текущие задания</div><div class="t" style="left:97.85px;top:107px;font-weight:normal;font-style:normal;font-size:12px;color:#000;letter-spacing:-0.057px;-webkit-text-stroke:0.1px #000">Задача</div><div class="t" style="left:20.00px;top:122px;font-weight:normal;font-style:normal;font-size:12px;color:#000;letter-spacing:0.072px;-webkit-text-stroke:0.1px #000">Генератор заданий на загрузку л...</div><div class="t" style="left:271.30px;top:107px;font-weight:normal;font-style:normal;font-size:12px;color:#000;letter-spacing:0.263px;-webkit-text-stroke:0.1px #000">Период</div><div class="t" style="left:383.55px;top:107px;font-weight:normal;font-style:normal;font-size:12px;color:#000;letter-spacing:-0.055px;-webkit-text-stroke:0.1px #000">Месяцы</div><div class="t" style="left:457.20px;top:107px;font-weight:normal;font-style:normal;font-size:12px;color:#000;letter-spacing:0.148px;-webkit-text-stroke:0.1px #000">Дни мес</div><div class="t" style="left:532.50px;top:107px;font-weight:normal;font-style:normal;font-size:12px;color:#000;letter-spacing:0.195px;-webkit-text-stroke:0.1px #000">Дни нед</div><div class="t" style="left:616.15px;top:107px;font-weight:normal;font-style:normal;font-size:12px;color:#000;letter-spacing:0.009px;-webkit-text-stroke:0.1px #000">Часы</div><div class="t" style="left:685.00px;top:107px;font-weight:normal;font-style:normal;font-size:12px;color:#000;letter-spacing:-0.364px;-webkit-text-stroke:0.1px #000">Минуты</div><div class="t" style="left:762.75px;top:107px;font-weight:normal;font-style:normal;font-size:12px;color:#000;letter-spacing:-0.487px;-webkit-text-stroke:0.1px #000">Статус</div><div class="t" style="left:744.60px;top:122px;font-weight:normal;font-style:normal;font-size:12px;color:#000;letter-spacing:0.032px;-webkit-text-stroke:0.1px #000">не работает</div><div class="t" style="left:825.00px;top:107px;font-weight:normal;font-style:normal;font-size:12px;color:#000;letter-spacing:0.164px;-webkit-text-stroke:0.1px #000">Приоритет</div><div class="t" style="left:819.60px;top:122px;font-weight:normal;font-style:normal;font-size:12px;color:#000;letter-spacing:0.195px;-webkit-text-stroke:0.1px #000">нормальн...</div><div class="t" style="left:17.80px;top:277px;font-weight:bold;font-style:normal;font-size:12px;color:#000;letter-spacing:-0.146px;-webkit-text-stroke:0.3px #000">Настройка задания</div><div class="t" style="left:23.80px;top:299px;font-weight:bold;font-style:normal;font-size:12px;color:#000;letter-spacing:-0.226px;-webkit-text-stroke:0.3px #000">Время запуска</div><div class="t" style="left:48.00px;top:324px;font-weight:bold;font-style:normal;font-size:12px;color:#000;letter-spacing:-0.594px;-webkit-text-stroke:0.3px #000">Минуты:</div><div class="t" style="left:61.00px;top:353px;font-weight:bold;font-style:normal;font-size:12px;color:#000;letter-spacing:-0.257px;-webkit-text-stroke:0.3px #000">Часы:</div><div class="t" style="left:24.30px;top:382px;font-weight:bold;font-style:normal;font-size:12px;color:#000;letter-spacing:-0.207px;-webkit-text-stroke:0.3px #000">Дни месяца:</div><div class="t" style="left:22.80px;top:411px;font-weight:bold;font-style:normal;font-size:12px;color:#000;letter-spacing:-0.052px;-webkit-text-stroke:0.3px #000">Дни недели:</div><div class="t" style="left:45.20px;top:440px;font-weight:bold;font-style:normal;font-size:12px;color:#000;letter-spacing:-0.169px;-webkit-text-stroke:0.3px #000">Месяцы:</div><div class="t" style="left:323.70px;top:299px;font-weight:bold;font-style:normal;font-size:12px;color:#000;letter-spacing:-0.296px;-webkit-text-stroke:0.3px #000">Период</div><div class="t" style="left:372.50px;top:323px;font-weight:bold;font-style:normal;font-size:12px;color:#000;letter-spacing:0.000px;transform:scaleX(0.929);transform-origin:0 0;-webkit-text-stroke:0.3px #000">с</div><div class="t" style="left:479.80px;top:323px;font-weight:bold;font-style:normal;font-size:12px;color:#000;letter-spacing:-0.948px;-webkit-text-stroke:0.3px #000">по</div><div class="t" style="left:323.70px;top:354px;font-weight:bold;font-style:normal;font-size:12px;color:#000;letter-spacing:0.230px;-webkit-text-stroke:0.3px #000">Задача</div><div class="t" style="left:328.80px;top:379px;font-weight:bold;font-style:normal;font-size:12px;color:#000;letter-spacing:-0.143px;-webkit-text-stroke:0.3px #000">Название:</div><div class="t" style="left:398.00px;top:379px;font-weight:bold;font-style:normal;font-size:12px;color:#000;letter-spacing:-0.177px;-webkit-text-stroke:0.3px #000">Обсчет логов IPN</div><div class="t" style="left:324.40px;top:409px;font-weight:bold;font-style:normal;font-size:12px;color:#000;letter-spacing:-0.415px;-webkit-text-stroke:0.3px #000">Приоритет:</div><div class="t" style="left:398.00px;top:409px;font-weight:bold;font-style:normal;font-size:12px;color:#000;letter-spacing:-0.371px;-webkit-text-stroke:0.3px #000">нормальный</div><div class="t" style="left:323.10px;top:439px;font-weight:bold;font-style:normal;font-size:12px;color:#000;letter-spacing:-0.278px;-webkit-text-stroke:0.3px #000">Состояние:</div><div class="t" style="left:398.00px;top:439px;font-weight:bold;font-style:normal;font-size:12px;color:#000;letter-spacing:-0.135px;-webkit-text-stroke:0.3px #000">выключено</div><div class="t" style="left:663.60px;top:303px;font-weight:bold;font-style:normal;font-size:12px;color:#000;letter-spacing:-0.413px;-webkit-text-stroke:0.3px #000">Комментарий</div><div class="t" style="left:760.80px;top:303px;font-weight:bold;font-style:normal;font-size:12px;color:#000;letter-spacing:-0.117px;-webkit-text-stroke:0.3px #000">Параметры запуска</div><div class="t" style="left:662.00px;top:332px;font-weight:bold;font-style:italic;font-size:12px;color:#0000ff;letter-spacing:-0.252px;-webkit-text-stroke:0.3px #0000ff">mid</div><div class="t" style="left:682.80px;top:332px;font-weight:normal;font-style:normal;font-size:12px;color:#000;letter-spacing:0.000px;transform:scaleX(0.857);transform-origin:0 0;-webkit-text-stroke:0.1px #000">=</div><div class="t" style="left:689.20px;top:332px;font-weight:bold;font-style:italic;font-size:12px;color:#ff0000;letter-spacing:0.000px;transform:scaleX(0.750);transform-origin:0 0;-webkit-text-stroke:0.3px #ff0000">7</div><div class="t" style="left:39.50px;top:486px;font-weight:bold;font-style:normal;font-size:12px;color:#000;letter-spacing:-0.427px;-webkit-text-stroke:0.3px #000">Востановить</div><div class="t" style="left:764.90px;top:486px;font-weight:bold;font-style:normal;font-size:12px;color:#000;letter-spacing:-1.134px;-webkit-text-stroke:0.3px #000">Ок</div><div class="t" style="left:822.30px;top:486px;font-weight:bold;font-style:normal;font-size:12px;color:#000;letter-spacing:-0.522px;-webkit-text-stroke:0.3px #000">Отмена</div></div>
</body></html>
